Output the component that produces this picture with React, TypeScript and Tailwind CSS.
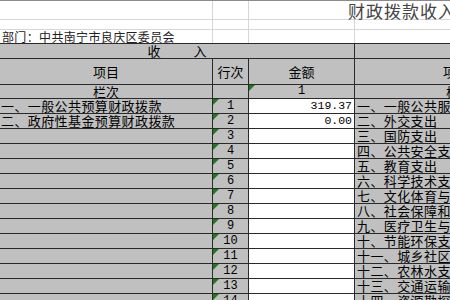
import React from "react";

const cjk = { fontFamily: '"Noto Sans CJK SC", "Noto Sans", sans-serif' };
const mono = { fontFamily: '"Liberation Mono", "DejaVu Sans Mono", monospace' };

function Tri() {
  return (
    <span className="absolute left-0 top-0 h-0 w-0 border-t-[6px] border-r-[6px] border-t-[#1f7a1f] border-r-transparent" />
  );
}

const rightItems = [
  "一、一般公共服务支出",
  "二、外交支出",
  "三、国防支出",
  "四、公共安全支出",
  "五、教育支出",
  "六、科学技术支出",
  "七、文化体育与传媒支出",
  "八、社会保障和就业支出",
  "九、医疗卫生与计划生育支出",
  "十、节能环保支出",
  "十一、城乡社区支出",
  "十二、农林水支出",
  "十三、交通运输支出",
  "十四、资源勘探信息等支出",
];

const leftItems = ["一、一般公共预算财政拨款", "二、政府性基金预算财政拨款"];
const amounts = ["319.37", "0.00"];

export default function App() {
  return (
    <div
      className="w-[450px] h-[300px] overflow-hidden bg-white text-black border-t border-[#8a8a8a]"
      style={cjk}
    >
      {/* top white area */}
      <div className="flex h-[19px] border-b border-[#d6d6d6]">
        <div className="w-[213px] shrink-0 border-r border-[#d6d6d6]" />
        <div className="w-[36px] shrink-0 border-r border-[#d6d6d6]" />
        <div className="w-[306px] shrink-0 pl-[99px] text-[17px] leading-[19px] tracking-[1px] text-[#444] whitespace-nowrap">
          财政拨款收入支出决算总表
        </div>
      </div>
      <div className="flex h-[10px] border-b border-[#d6d6d6]">
        <div className="w-[213px] shrink-0 border-r border-[#d6d6d6]" />
        <div className="w-[36px] shrink-0 border-r border-[#d6d6d6]" />
        <div className="w-[106px] shrink-0 border-r border-[#d6d6d6]" />
        <div className="w-[300px] shrink-0" />
      </div>
      <div className="flex h-[13px]">
        <div className="w-[213px] shrink-0 border-r border-[#d6d6d6] pl-[2px] text-[12px] leading-[13px] tracking-[0.35px] text-[#222] whitespace-nowrap">
          部门：中共南宁市良庆区委员会
        </div>
        <div className="w-[36px] shrink-0 border-r border-[#d6d6d6]" />
        <div className="w-[106px] shrink-0 border-r border-[#d6d6d6]" />
        <div className="w-[300px] shrink-0" />
      </div>

      {/* table */}
      <div className="bg-[#c0c0c0] border-t border-[#2a2a2a] text-[13px]">
        <div className="flex h-[15px] border-b border-[#2a2a2a]">
          <div className="w-[355px] shrink-0 border-r border-[#2a2a2a] flex justify-center items-center gap-[33px] leading-[14px]">
            <span>收</span>
            <span>入</span>
          </div>
          <div className="w-[300px] shrink-0 flex items-center gap-[33px] pl-[140px] leading-[14px]">
            <span>支</span>
            <span>出</span>
          </div>
        </div>
        <div className="flex h-[26px] border-b border-[#2a2a2a] leading-[25px]">
          <div className="w-[213px] shrink-0 border-r border-[#2a2a2a] text-center">项目</div>
          <div className="w-[36px] shrink-0 border-r border-[#2a2a2a] text-center">行次</div>
          <div className="w-[106px] shrink-0 border-r border-[#2a2a2a] text-center">金额</div>
          <div className="w-[300px] shrink-0 pl-[88px]">项目</div>
        </div>
        <div className="flex h-[14px] border-b border-[#2a2a2a] leading-[13px]">
          <div className="w-[213px] shrink-0 border-r border-[#2a2a2a] text-center">栏次</div>
          <div className="w-[36px] shrink-0 border-r border-[#2a2a2a]" />
          <div className="relative w-[106px] shrink-0 border-r border-[#2a2a2a] text-center text-[12px]" style={mono}>
            <Tri />1
          </div>
          <div className="w-[300px] shrink-0 pl-[91px]">栏次</div>
        </div>
        {rightItems.map((r, i) => (
          <div key={i} className="flex h-[15px] border-b border-[#2a2a2a] leading-[14px]">
            <div className="w-[213px] shrink-0 border-r border-[#2a2a2a] whitespace-nowrap tracking-[0.4px] pl-px">
              {leftItems[i] ?? ""}
            </div>
            <div className="relative w-[36px] shrink-0 border-r border-[#2a2a2a] text-center text-[12px]" style={mono}>
              <Tri />
              {i + 1}
            </div>
            <div className="w-[106px] shrink-0 border-r border-[#2a2a2a] bg-white text-right pr-[2px] text-[11.5px]" style={mono}>
              {amounts[i] ?? ""}
            </div>
            <div className="w-[300px] shrink-0 whitespace-nowrap overflow-hidden tracking-[0.4px] pl-[2px]">
              {r}
            </div>
          </div>
        ))}
      </div>
    </div>
  );
}
